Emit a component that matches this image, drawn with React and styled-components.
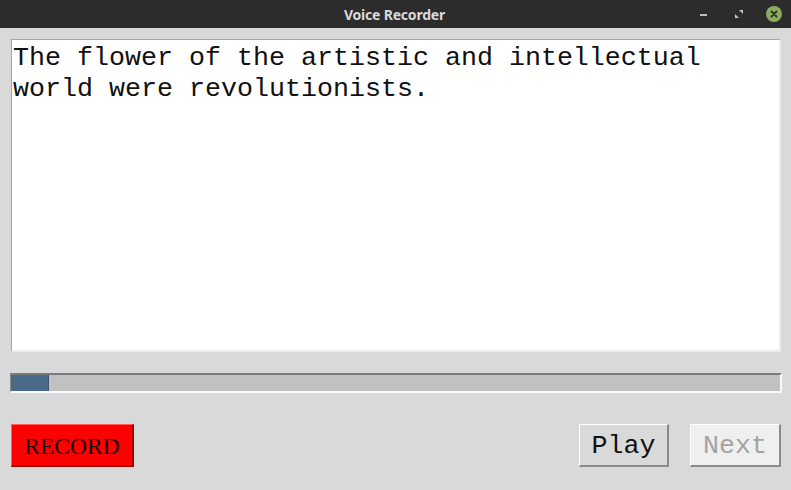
import React from "react";
import styled, { createGlobalStyle } from "styled-components";

const Global = createGlobalStyle`
  html, body { margin: 0; padding: 0; background: #d9d9d9; }
  #root { width: 791px; height: 490px; }
`;

const Window = styled.div`
  width: 791px;
  height: 490px;
  background: #d9d9d9;
  display: flex;
  flex-direction: column;
  overflow: hidden;
`;

const TitleBar = styled.div`
  height: 28px;
  background: #2c2c2c;
  display: flex;
  align-items: center;
  justify-content: center;
  position: relative;
  flex-shrink: 0;
`;

const Title = styled.div`
  font-family: "Noto Sans", "DejaVu Sans", sans-serif;
  font-weight: bold;
  font-size: 14px;
  color: #dadada;
  letter-spacing: -0.2px;
  margin-left: -2px;
`;

const Controls = styled.div`
  position: absolute;
  right: 9px;
  top: 6px;
  display: flex;
  align-items: center;
  gap: 19px;
`;

const Ctl = styled.div`
  width: 16px;
  height: 16px;
  display: flex;
  align-items: center;
  justify-content: center;
`;

const Close = styled.div`
  width: 16px;
  height: 16px;
  border-radius: 50%;
  background: #8bab5f;
  display: flex;
  align-items: center;
  justify-content: center;
`;

const Body = styled.div`
  display: flex;
  flex-direction: column;
  padding: 11px 10px 0 10px;
`;

const TextArea = styled.div`
  margin-left: 1px;
  width: 766px;
  height: 307px;
  background: #ffffff;
  border-top: 1px solid #a6a6a6;
  border-left: 1px solid #a6a6a6;
  border-right: 2px solid #ececec;
  border-bottom: 2px solid #ececec;
  padding: 3px 0 0 1px;
  font-family: "Liberation Mono", "Courier New", monospace;
  font-size: 26.67px;
  line-height: 31px;
  color: #111111;
  white-space: pre-wrap;
`;

const Progress = styled.div`
  margin-top: 21px;
  width: 769px;
  height: 16px;
  background: #c1c1c1;
  border-top: 2px solid #7b7b7b;
  border-left: 1px solid #8a8a8a;
  border-right: 2px solid #fafafa;
  border-bottom: 2px solid #fafafa;
  box-sizing: content-box;
  display: flex;
`;

const Fill = styled.div`
  height: 100%;
  background: #4a6a8a;
  border-right: 1px solid #3b5570;
  box-sizing: border-box;
`;

const ButtonRow = styled.div`
  margin-top: 31px;
  display: flex;
  align-items: center;
  padding-left: 1px;
`;

const Button = styled.div`
  height: 43px;
  box-sizing: border-box;
  width: ${(p) => p.$w}px;
  display: flex;
  align-items: center;
  justify-content: center;
  padding-top: ${(p) => (p.$serif ? 3 : 2)}px;
  background: ${(p) => p.$bg};
  color: ${(p) => p.$fg};
  border-top: 1px solid ${(p) => p.$light};
  border-left: 1px solid ${(p) => p.$light};
  border-right: 2px solid ${(p) => p.$dark};
  border-bottom: 2px solid ${(p) => p.$dark};
  font-family: ${(p) =>
    p.$serif
      ? '"Liberation Serif", "Times New Roman", serif'
      : '"Liberation Mono", "Courier New", monospace'};
  font-size: ${(p) => (p.$serif ? "23.5px" : "26.67px")};
  margin-left: ${(p) => p.$ml || 0}px;
`;

const Spacer = styled.div`
  flex: 1;
`;

export default function App() {
  const progress = 38;
  return (
    <>
      <Global />
      <Window>
        <TitleBar>
          <Title>Voice Recorder</Title>
          <Controls>
            <Ctl>
              <svg width="12" height="12" viewBox="0 0 12 12">
                <rect x="2" y="6" width="7" height="2" fill="#bdbdbd" />
              </svg>
            </Ctl>
            <Ctl>
              <svg width="12" height="12" viewBox="0 0 12 12">
                <path d="M6 2 L10 2 L10 6 Z" fill="#c4c4c4" />
                <path d="M2 6 L6 10 L2 10 Z" fill="#c4c4c4" />
              </svg>
            </Ctl>
            <Close>
              <svg width="10" height="10" viewBox="0 0 10 10">
                <path d="M2.5 2.5 L7.5 7.5 M7.5 2.5 L2.5 7.5" stroke="#2c2c2c" strokeWidth="1.8" strokeLinecap="round" />
              </svg>
            </Close>
          </Controls>
        </TitleBar>
        <Body>
          <TextArea>The flower of the artistic and intellectual{"\n"}world were revolutionists.</TextArea>
          <Progress>
            <Fill style={{ width: `${progress}px` }} />
          </Progress>
          <ButtonRow>
            <Button $w={123} $bg="#ff0000" $fg="#1a0000" $light="#ff6060" $dark="#a00000" $serif>
              RECORD
            </Button>
            <Spacer />
            <Button $w={90} $bg="#d9d9d9" $fg="#111" $light="#ffffff" $dark="#8a8a8a">
              Play
            </Button>
            <Button $w={91} $ml={21} $bg="#efefef" $fg="#a3a3a3" $light="#ffffff" $dark="#8a8a8a">
              Next
            </Button>
          </ButtonRow>
        </Body>
      </Window>
    </>
  );
}
